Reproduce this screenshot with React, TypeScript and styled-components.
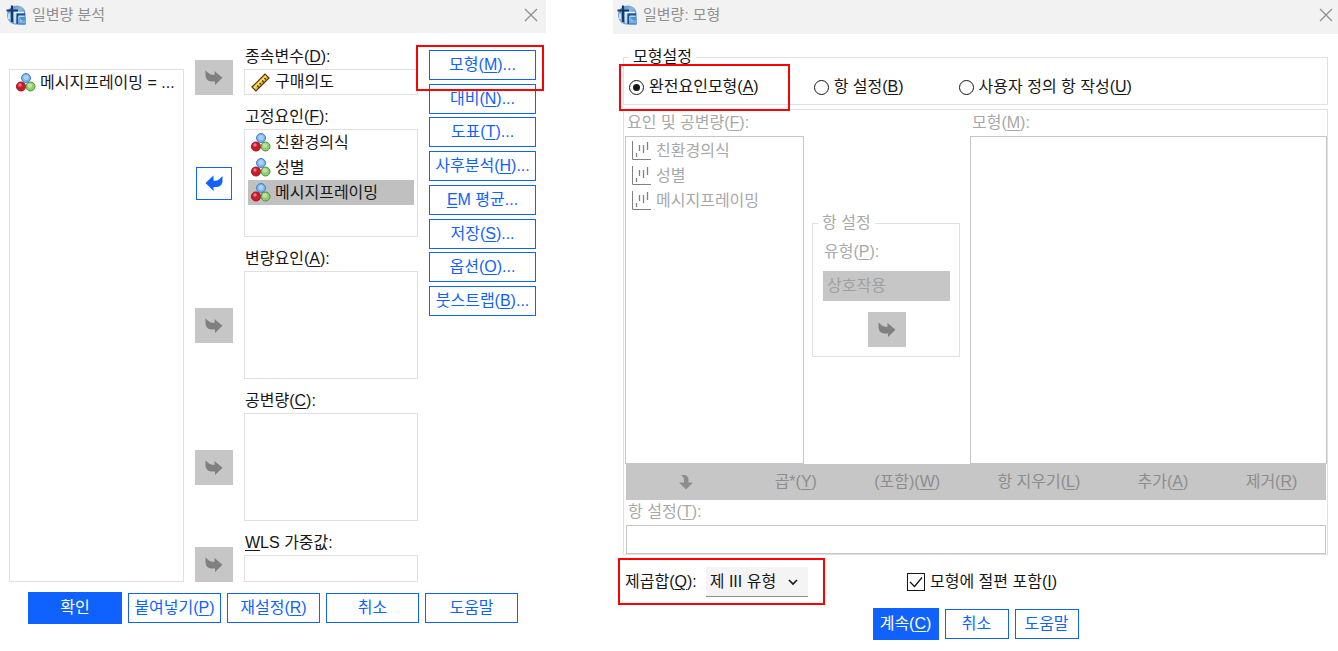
import React, { useState } from "react";
import styled, { createGlobalStyle, css } from "styled-components";

const BLUE = "#0f62fe";
const INK = "#161616";
const MUTED = "#a8a8a8";
const LINE = "#e0e0e0";
const LINE_DARK = "#c6c6c6";
const RED = "#ff0000";

const GlobalStyle = createGlobalStyle`
  *, *::before, *::after { box-sizing: border-box; }
  body { margin: 0; background: #fff; }
  body, button, input, select {
    font-family: "Liberation Sans", "Noto Sans CJK KR", sans-serif;
    font-size: 16px;
    line-height: 24px;
    color: ${INK};
  }
  u { text-underline-offset: 2px; text-decoration-thickness: 1px; }
`;

const Page = styled.div`
  display: flex;
  align-items: flex-start;
  gap: 67px;
`;

const Dialog = styled.section<{ $grow: number }>`
  flex: ${(p) => p.$grow} 1 0;
  min-width: ${(p) => p.$grow}px;
`;

const TitleBar = styled.header<{ $tall?: boolean }>`
  display: flex;
  align-items: center;
  gap: 6px;
  height: ${(p) => (p.$tall ? 34 : 33)}px;
  padding: ${(p) => (p.$tall ? "0 5px 4px 4px" : "0 8px 4px 6px")};
  background: #f2f2f2;
`;

const Title = styled.h1`
  flex: 1;
  margin: 0;
  font-size: 15px;
  font-weight: 400;
  line-height: 22px;
  color: #8f8f8f;
`;

const CloseButton = styled.button`
  display: flex;
  padding: 0;
  border: 0;
  background: none;
`;

const Button = styled.button<{ $primary?: boolean; $width?: number }>`
  width: ${(p) => (p.$width ? `${p.$width}px` : "100%")};
  height: ${(p) => (p.$primary ? 32 : 30)}px;
  padding: 0;
  border: 1px solid ${BLUE};
  background: ${(p) => (p.$primary ? BLUE : "#fff")};
  color: ${(p) => (p.$primary ? "#fff" : BLUE)};
  white-space: nowrap;
`;

const highlight = css`
  position: relative;
  &::after {
    content: "";
    position: absolute;
    z-index: 1;
    border: 2px solid ${RED};
    pointer-events: none;
  }
`;

const ModelButtonMark = styled.div`
  ${highlight}
  &::after { inset: -5px -8px -11px -13px; }
`;

const Footer = styled.footer<{ $top: number }>`
  display: flex;
  align-items: center;
  justify-content: center;
  gap: 6px;
  margin-top: ${(p) => p.$top}px;
`;

/* Univariate dialog */

const MainBody = styled.div`
  display: grid;
  grid-template-columns: 175fr 223fr 107px;
  column-gap: 11px;
  padding: 12px 10px 0 9px;
`;

const ListBox = styled.ul<{ $height?: number; $dark?: boolean }>`
  min-height: ${(p) => p.$height ?? 26}px;
  margin: 0;
  padding: ${(p) => (p.$dark ? 1 : 0)}px 3px 0;
  border: 1px solid ${(p) => (p.$dark ? LINE_DARK : LINE)};
  list-style: none;
  color: ${(p) => (p.$dark ? MUTED : INK)};
`;

const SourceList = styled(ListBox)`
  margin-top: 24px;
`;

const ListItem = styled.li<{ $selected?: boolean; $compact?: boolean }>`
  display: flex;
  align-items: center;
  gap: 4px;
  height: ${(p) => (p.$compact ? 24 : 25)}px;
  padding-left: 3px;
  background: ${(p) => (p.$selected ? "#c0c0c0" : "transparent")};
  white-space: nowrap;
`;

const Targets = styled.div`
  display: flex;
  flex-direction: column;
  gap: 10px;
`;

const TargetRow = styled.div<{ $large?: boolean }>`
  display: grid;
  grid-template-columns: 38px 1fr;
  column-gap: 11px;
  align-items: ${(p) => (p.$large ? "center" : "end")};
`;

const ArrowCell = styled.div<{ $large?: boolean }>`
  display: flex;
  justify-content: center;
  padding-top: ${(p) => (p.$large ? 24 : 0)}px;
`;

const ArrowButton = styled.button<{ $active?: boolean }>`
  display: flex;
  align-items: center;
  justify-content: center;
  width: ${(p) => (p.$active ? 36 : 38)}px;
  height: ${(p) => (p.$active ? 33 : 35)}px;
  padding: 0;
  border: ${(p) => (p.$active ? `1px solid ${BLUE}` : "0")};
  background: ${(p) => (p.$active ? "#fff" : "#c6c6c6")};
  color: ${(p) => (p.$active ? BLUE : "#808080")};
`;

const FieldLabel = styled.label<{ $muted?: boolean }>`
  display: block;
  padding-left: 1px;
  color: ${(p) => (p.$muted ? MUTED : INK)};
  white-space: nowrap;
`;

const TextInput = styled.input<{ $dark?: boolean }>`
  display: block;
  width: 100%;
  height: ${(p) => (p.$dark ? 29 : 27)}px;
  padding: 0 6px;
  border: 1px solid ${(p) => (p.$dark ? LINE_DARK : LINE)};
  background: #fff;
`;

const ButtonColumn = styled.div`
  display: flex;
  flex-direction: column;
  justify-content: space-between;
  align-self: start;
  height: 266px;
  margin-top: 5px;
`;

/* Model dialog */

const ModelBody = styled.div`
  padding: 12px 10px 0;
`;

const ModelKind = styled.fieldset`
  margin: 0;
  padding: 0;
  border: 1px solid ${LINE};
`;

const Legend = styled.legend`
  margin-left: 5px;
  padding: 0 4px;
  line-height: 22px;
`;

const RadioRow = styled.div`
  display: flex;
  align-items: center;
  gap: 55px;
  height: 36px;
  padding: 2px 5px 0;
`;

const Choice = styled.label`
  display: flex;
  align-items: center;
  gap: 5px;
  white-space: nowrap;
`;

const MarkedChoice = styled(Choice)`
  ${highlight}
  &::after { inset: -11px -31px -12px -10px; }
`;

const Radio = styled.input`
  appearance: none;
  display: grid;
  place-content: center;
  width: 15px;
  height: 15px;
  margin: 0;
  border: 1px solid ${INK};
  border-radius: 50%;
  &:checked::before {
    content: "";
    width: 7px;
    height: 7px;
    border-radius: 50%;
    background: ${INK};
  }
`;

const TermPanel = styled.div`
  margin-top: 4px;
  padding-left: 1px;
  border: 1px solid ${LINE};
  color: ${MUTED};
`;

const TermGrid = styled.div`
  display: grid;
  grid-template-columns: 179fr 166px 357fr;
`;

const TermFooter = styled.div`
  padding: 0 1px;
`;

const PanelLabel = styled.div`
  padding: 1px 2px;
  white-space: nowrap;
`;

const BuildTerms = styled.fieldset`
  margin: 102px 10px 0 8px;
  min-width: 0;
  padding: 6px 9px 9px 10px;
  border: 1px solid ${LINE};
`;

const BuildLegend = styled(Legend)`
  margin-left: -5px;
`;

const DisabledSelect = styled.select`
  appearance: none;
  display: block;
  width: 100%;
  height: 30px;
  margin: 7px 0 11px;
  padding: 0 4px;
  border: 0;
  border-radius: 0;
  background: #c6c6c6;
  color: #a0a0a0;
  opacity: 1;
`;

const Toolbar = styled.div`
  display: flex;
  height: 36px;
  background: #c6c6c6;
`;

const ToolButton = styled.button<{ $icon?: boolean }>`
  display: flex;
  flex: ${(p) => (p.$icon ? "0 0 120px" : "1 1 auto")};
  align-items: center;
  justify-content: center;
  padding: 0;
  border: 0;
  background: none;
  color: #8d8d8d;
  white-space: nowrap;
`;

const TermLabel = styled(FieldLabel)`
  padding: 0 0 1px 2px;
`;

const Options = styled.div`
  display: grid;
  grid-template-columns: 282fr 421fr;
  align-items: center;
  margin-top: 12px;
  padding-left: 2px;
`;

const SumOfSquares = styled.div`
  ${highlight}
  display: flex;
  align-items: center;
  justify-self: start;
  gap: 9px;
  &::after { inset: -9px -17px -8px -7px; }
`;

const SelectWrap = styled.div`
  position: relative;
  svg {
    position: absolute;
    right: 10px;
    top: 12px;
    pointer-events: none;
  }
`;

const Select = styled.select`
  appearance: none;
  display: block;
  width: 102px;
  height: 30px;
  padding: 0 0 0 4px;
  border: 0;
  border-bottom: 1px solid #8d8d8d;
  border-radius: 0;
  background: #f4f4f4;
`;

const CheckWrap = styled.span`
  position: relative;
  display: flex;
  svg {
    position: absolute;
    inset: 0;
    pointer-events: none;
  }
`;

const Checkbox = styled.input`
  appearance: none;
  width: 18px;
  height: 18px;
  margin: 0;
  border: 1px solid ${INK};
  & + svg { visibility: hidden; }
  &:checked + svg { visibility: visible; }
`;

/* Icons */

const AppIcon = ({ id }: { id: string }) => (
  <svg width="20" height="20" viewBox="0 0 20 20" aria-hidden="true">
    <defs>
      <linearGradient id={id} x1="0" y1="0" x2="1" y2="1">
        <stop offset="0" stopColor="#4f86bd" />
        <stop offset="0.45" stopColor="#8db8dd" />
        <stop offset="1" stopColor="#2667ad" />
      </linearGradient>
    </defs>
    <path d="M11 0.500C16 0.500 19.500 4 19.500 9V19.500H10C4.500 19.500 1 15.500 1 10C1 4.500 5.500 0.500 11 0.500Z" fill={`url(#${id})`} />
    <path d="M3 8.500V14M9 8V18.500M8 7.500H18" stroke="#eef6fc" strokeWidth="1.400" fill="none" />
    <path d="M6 0.500V17M0.500 5.500H12" stroke="#143a72" strokeWidth="2.200" fill="none" />
    <path d="M19 9.500H11.500V19" stroke="#1c4f92" strokeWidth="1.800" fill="none" />
    <path d="M18.500 11.200H13V19" stroke="#e3effa" strokeWidth="1" fill="none" />
    <path d="M13.500 12H19.500V19.500H12Z" fill="#4b93d8" />
    <path d="M14 13.500V18M14 15.500H16V18M18 15.500V18" stroke="#a6cdf2" strokeWidth="1" fill="none" />
  </svg>
);

const CloseIcon = () => (
  <svg width="14" height="14" viewBox="0 0 14 14" aria-hidden="true">
    <path d="M1 1L13 13M13 1L1 13" stroke="#8f8f8f" strokeWidth="1.3" />
  </svg>
);

const NominalIcon = () => (
  <svg width="20" height="19" viewBox="0 0 20 19" aria-hidden="true">
    <circle cx="10" cy="5" r="4.500" fill="#7db4ee" stroke="#3f7fc9" />
    <circle cx="10" cy="4.500" r="2.500" fill="#a9d0f8" />
    <circle cx="5" cy="13.500" r="4.500" fill="#cb1b2c" stroke="#9d1020" />
    <circle cx="4" cy="12" r="1.700" fill="#ee7a84" />
    <circle cx="14.500" cy="13.500" r="4.500" fill="#94cb72" stroke="#4c9136" />
    <circle cx="14" cy="12.500" r="2.300" fill="#bfe3a4" />
  </svg>
);

const ScaleIcon = () => (
  <svg width="20" height="19" viewBox="0 0 20 19" aria-hidden="true">
    <path d="M1 14L14 1L18 5L5 18Z" fill="#f3b81c" stroke="#4a3a14" strokeWidth="1.200" />
    <path d="M3 15L15 3" stroke="#ffe48a" strokeWidth="1.400" />
    <path d="M6 12.500L8 14.500M8.500 10L10 11.500M11 7.500L13 9.500M13.500 5L15 6.500" stroke="#4a3a14" strokeWidth="1.200" />
  </svg>
);

const FactorIcon = () => (
  <svg width="20" height="20" viewBox="0 0 20 20" aria-hidden="true">
    <path d="M0.500 0V18.500H19" stroke="#808080" strokeWidth="1" fill="none" />
    <path d="M4.500 12V16M7.500 4V10M11.500 4V12M15.500 1V9" stroke="#808080" strokeWidth="1.300" fill="none" />
  </svg>
);

const RightArrow = () => (
  <svg width="18" height="15" viewBox="0 0 18 15" aria-hidden="true">
    <path d="M0.500 0.500L4 3.500C5 4.500 6.500 4.800 9.500 4.800V1L17.500 7.800L10 15V11.500H6.500C2.500 11.500 0.500 8.500 0.500 5Z" fill="currentColor" />
  </svg>
);

const LeftArrow = () => (
  <svg width="18" height="16" viewBox="0 0 18 16" aria-hidden="true">
    <path d="M17.500 1L14 4.500C13 5.500 11.500 5.800 8.500 5.800V0.500L0.500 8L8.500 16V12H11.500C15.500 12 17.500 9 17.500 5.500Z" fill="currentColor" />
  </svg>
);

const DownArrow = () => (
  <svg width="14" height="15" viewBox="0 0 14 15" aria-hidden="true">
    <path d="M2 0H5C8 0 9.500 2 9.500 5V7.500H14L7 14.500L0 7.500H5V5C5 3 4 1.500 2 0Z" fill="currentColor" />
  </svg>
);

const Chevron = () => (
  <svg width="10" height="7" viewBox="0 0 10 7" aria-hidden="true">
    <path d="M1 1L5 5L9 1" stroke={INK} strokeWidth="1.600" fill="none" />
  </svg>
);

const CheckMark = () => (
  <svg width="18" height="18" viewBox="0 0 18 18" aria-hidden="true">
    <path d="M3 9L7.500 13.500L15 4.500" stroke={INK} strokeWidth="1.300" fill="none" />
  </svg>
);

type TargetProps = {
  id: string;
  label: React.ReactNode;
  large?: boolean;
  active?: boolean;
  children: React.ReactNode;
};

const Target = ({ id, label, large, active, children }: TargetProps) => (
  <TargetRow $large={large}>
    <ArrowCell $large={large}>
      <ArrowButton $active={active} disabled={!active} aria-label="이동">
        {active ? <LeftArrow /> : <RightArrow />}
      </ArrowButton>
    </ArrowCell>
    <div>
      <FieldLabel as={id === "wls" ? "label" : "div"} id={`${id}-label`} {...(id === "wls" ? { htmlFor: id } : {})}>
        {label}
      </FieldLabel>
      {children}
    </div>
  </TargetRow>
);

const FACTORS = ["친환경의식", "성별", "메시지프레이밍"];

const UnivariateDialog = () => (
  <Dialog $grow={546} aria-label="일변량 분석">
    <TitleBar>
      <AppIcon id="globe-main" />
      <Title>일변량 분석</Title>
      <CloseButton aria-label="닫기"><CloseIcon /></CloseButton>
    </TitleBar>
    <MainBody>
      <SourceList role="listbox" aria-label="변수">
        <ListItem role="option"><NominalIcon />메시지프레이밍 = ...</ListItem>
      </SourceList>
      <Targets>
        <Target id="dependent" label={<>종속변수(<u>D</u>):</>}>
          <ListBox role="listbox" aria-labelledby="dependent-label">
            <ListItem $compact role="option"><ScaleIcon />구매의도</ListItem>
          </ListBox>
        </Target>
        <Target id="fixed" label={<>고정요인(<u>F</u>):</>} large active>
          <ListBox $height={108} role="listbox" aria-labelledby="fixed-label">
            {FACTORS.map((name, i) => (
              <ListItem key={name} role="option" aria-selected={i === 2} $selected={i === 2}>
                <NominalIcon />{name}
              </ListItem>
            ))}
          </ListBox>
        </Target>
        <Target id="random" label={<>변량요인(<u>A</u>):</>} large>
          <ListBox $height={108} role="listbox" aria-labelledby="random-label" />
        </Target>
        <Target id="covariate" label={<>공변량(<u>C</u>):</>} large>
          <ListBox $height={108} role="listbox" aria-labelledby="covariate-label" />
        </Target>
        <Target id="wls" label={<><u>W</u>LS 가중값:</>}>
          <TextInput id="wls" />
        </Target>
      </Targets>
      <ButtonColumn>
        <ModelButtonMark><Button>모형(<u>M</u>)...</Button></ModelButtonMark>
        <Button>대비(<u>N</u>)...</Button>
        <Button>도표(<u>T</u>)...</Button>
        <Button>사후분석(<u>H</u>)...</Button>
        <Button><u>E</u>M 평균...</Button>
        <Button>저장(<u>S</u>)...</Button>
        <Button>옵션(<u>O</u>)...</Button>
        <Button>붓스트랩(<u>B</u>)...</Button>
      </ButtonColumn>
    </MainBody>
    <Footer $top={10}>
      <Button $primary $width={94}>확인</Button>
      <Button $width={93}>붙여넣기(<u>P</u>)</Button>
      <Button $width={93}>재설정(<u>R</u>)</Button>
      <Button $width={93}>취소</Button>
      <Button $width={93}>도움말</Button>
    </Footer>
  </Dialog>
);

const ModelDialog = () => {
  const [kind, setKind] = useState("full");
  const [intercept, setIntercept] = useState(true);
  const radio = (value: string) => (
    <Radio type="radio" name="kind" checked={kind === value} onChange={() => setKind(value)} />
  );
  return (
    <Dialog $grow={725} aria-label="일변량: 모형">
      <TitleBar $tall>
        <AppIcon id="globe-model" />
        <Title>일변량: 모형</Title>
        <CloseButton aria-label="닫기"><CloseIcon /></CloseButton>
      </TitleBar>
      <ModelBody>
        <ModelKind>
          <Legend>모형설정</Legend>
          <RadioRow>
            <MarkedChoice>{radio("full")}<span>완전요인모형(<u>A</u>)</span></MarkedChoice>
            <Choice>{radio("terms")}<span>항 설정(<u>B</u>)</span></Choice>
            <Choice>{radio("custom")}<span>사용자 정의 항 작성(<u>U</u>)</span></Choice>
          </RadioRow>
        </ModelKind>
        <TermPanel>
          <TermGrid>
            <div>
              <PanelLabel id="factors-label">요인 및 공변량(<u>F</u>):</PanelLabel>
              <ListBox $dark $height={328} role="listbox" aria-labelledby="factors-label" aria-disabled>
                {FACTORS.map((name) => (
                  <ListItem key={name} role="option"><FactorIcon />{name}</ListItem>
                ))}
              </ListBox>
            </div>
            <div>
              <BuildTerms disabled>
                <BuildLegend>항 설정</BuildLegend>
                <FieldLabel $muted htmlFor="term-type">유형(<u>P</u>):</FieldLabel>
                <DisabledSelect id="term-type"><option>상호작용</option></DisabledSelect>
                <ArrowCell>
                  <ArrowButton aria-label="이동"><RightArrow /></ArrowButton>
                </ArrowCell>
              </BuildTerms>
            </div>
            <div>
              <PanelLabel id="model-label">모형(<u>M</u>):</PanelLabel>
              <ListBox $dark $height={328} role="listbox" aria-labelledby="model-label" aria-disabled />
            </div>
          </TermGrid>
          <TermFooter>
            <Toolbar>
              <ToolButton $icon disabled aria-label="아래로 이동"><DownArrow /></ToolButton>
              <ToolButton disabled><span>곱*(<u>Y</u>)</span></ToolButton>
              <ToolButton disabled><span>(포함)(<u>W</u>)</span></ToolButton>
              <ToolButton disabled><span>항 지우기(<u>L</u>)</span></ToolButton>
              <ToolButton disabled><span>추가(<u>A</u>)</span></ToolButton>
              <ToolButton disabled><span>제거(<u>R</u>)</span></ToolButton>
            </Toolbar>
            <TermLabel $muted htmlFor="term">항 설정(<u>T</u>):</TermLabel>
            <TextInput $dark id="term" disabled />
          </TermFooter>
        </TermPanel>
        <Options>
          <SumOfSquares>
            <label htmlFor="ss">제곱합(<u>Q</u>):</label>
            <SelectWrap>
              <Select id="ss"><option>제 III 유형</option></Select>
              <Chevron />
            </SelectWrap>
          </SumOfSquares>
          <Choice>
            <CheckWrap>
              <Checkbox type="checkbox" checked={intercept} onChange={() => setIntercept(!intercept)} />
              <CheckMark />
            </CheckWrap>
            <span>모형에 절편 포함(<u>I</u>)</span>
          </Choice>
        </Options>
        <Footer $top={11}>
          <Button $primary $width={66}>계속(<u>C</u>)</Button>
          <Button $width={64}>취소</Button>
          <Button $width={64}>도움말</Button>
        </Footer>
      </ModelBody>
    </Dialog>
  );
};

export default function App() {
  return (
    <>
      <GlobalStyle />
      <Page>
        <UnivariateDialog />
        <ModelDialog />
      </Page>
    </>
  );
}
